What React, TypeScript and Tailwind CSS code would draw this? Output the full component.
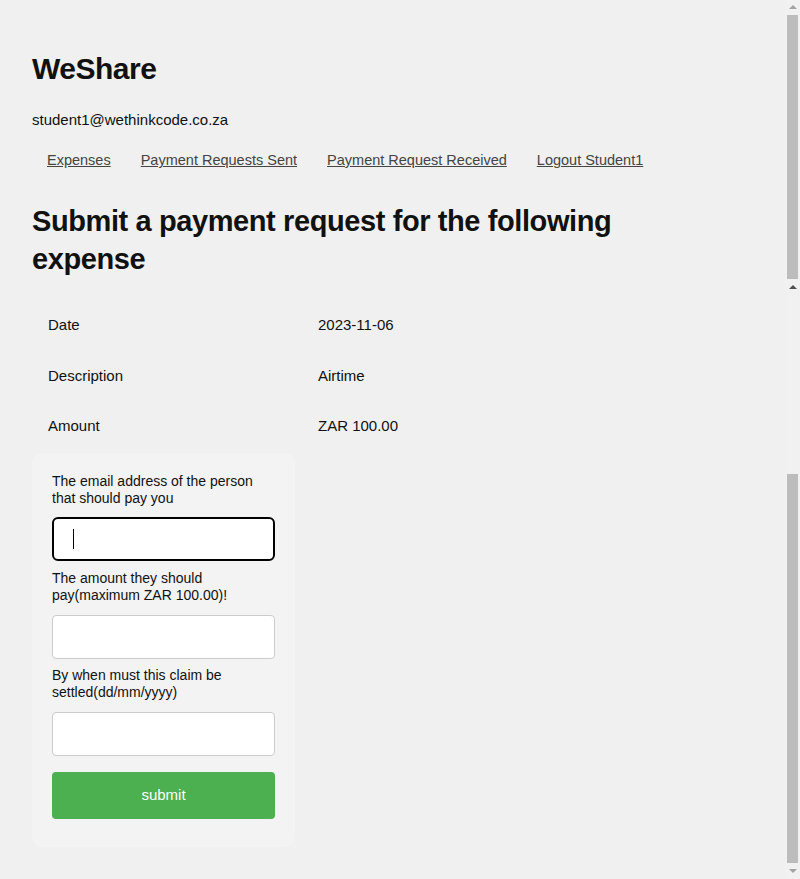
import { useState } from 'react';

const expense = [
  { label: 'Date', value: '2023-11-06' },
  { label: 'Description', value: 'Airtime' },
  { label: 'Amount', value: 'ZAR 100.00' },
];

const links = ['Expenses', 'Payment Requests Sent', 'Payment Request Received', 'Logout Student1'];

function ScrollStrip() {
  // fake classic scrollbar on the right edge
  return (
    <div className="fixed right-0 top-0 flex h-full w-[15px] flex-col items-center bg-[#f1f1f1]">
      <div className="mt-[5px] h-0 w-0 border-x-[4px] border-b-[4px] border-x-transparent border-b-[#a3a3a3]" />
      <div className="mt-[6px] h-[264px] w-[11px] bg-[#bcbcbc]" />
      <div className="mt-[6px] h-0 w-0 border-x-[4px] border-b-[4px] border-x-transparent border-b-[#505050]" />
      <div className="mt-[185px] h-[389px] w-[11px] bg-[#bcbcbc]" />
      <div className="mt-[6px] h-0 w-0 border-x-[4px] border-t-[4px] border-x-transparent border-t-[#a3a3a3]" />
    </div>
  );
}

export default function App() {
  const [email, setEmail] = useState('');
  const [amount, setAmount] = useState('');
  const [due, setDue] = useState('');

  return (
    <div className="min-h-screen bg-[#f0f0f0] px-8 pt-[49px] pb-8 font-['Liberation_Sans',Arial,sans-serif] text-[15px] text-[#111]">
      <ScrollStrip />
      <h1 className="text-[30px] font-bold leading-[40px] tracking-[-0.5px]">WeShare</h1>
      <p className="mt-[22px] leading-[18px]">student1@wethinkcode.co.za</p>
      <nav className="mt-[22px] flex text-[14.5px]">
        {links.map((link) => (
          <a key={link} href="#" className="px-[15px] leading-[18px] text-[#444] underline">
            {link}
          </a>
        ))}
      </nav>
      <h2 className="mt-[33px] max-w-[640px] text-[29px] font-bold leading-[38px] tracking-[-0.4px]">
        Submit a payment request for the following expense
      </h2>

      <table className="mt-[22px] border-collapse">
        <tbody>
          {expense.map((row) => (
            <tr key={row.label}>
              <td className="w-[270px] px-4 py-4 leading-[18.5px]">{row.label}</td>
              <td className="px-4 py-4 leading-[18.5px]">{row.value}</td>
            </tr>
          ))}
        </tbody>
      </table>

      <form className="mt-[1px] w-[263px] rounded-[10px] bg-[#f3f3f3] px-5 pt-[20px] pb-[28px] text-[14px]" onSubmit={(e) => e.preventDefault()}>
        <label className="block leading-[17px]">The email address of the person that should pay you</label>
        <div className="relative mt-[10px]">
          <input
            value={email}
            onChange={(e) => setEmail(e.target.value)}
            className="block h-[44px] w-full rounded-[6px] border-2 border-black bg-white px-5 outline-none"
          />
          {!email && <span className="absolute left-[21px] top-[12px] h-[20px] w-px bg-black" />}
        </div>
        <label className="mt-[9px] block leading-[17px]">The amount they should pay(maximum ZAR 100.00)!</label>
        <input
          value={amount}
          onChange={(e) => setAmount(e.target.value)}
          className="mt-[11px] block h-[44px] w-full rounded-[4px] border border-[#ccc] bg-white px-5 outline-none"
        />
        <label className="mt-[8px] block leading-[17px]">By when must this claim be settled(dd/mm/yyyy)</label>
        <input
          value={due}
          onChange={(e) => setDue(e.target.value)}
          className="mt-[11px] block h-[44px] w-full rounded-[4px] border border-[#ccc] bg-white px-5 outline-none"
        />
        <button type="submit" className="mt-[16px] block h-[47px] w-full rounded-[4px] bg-[#4caf50] text-[15px] text-white">
          submit
        </button>
      </form>
    </div>
  );
}
